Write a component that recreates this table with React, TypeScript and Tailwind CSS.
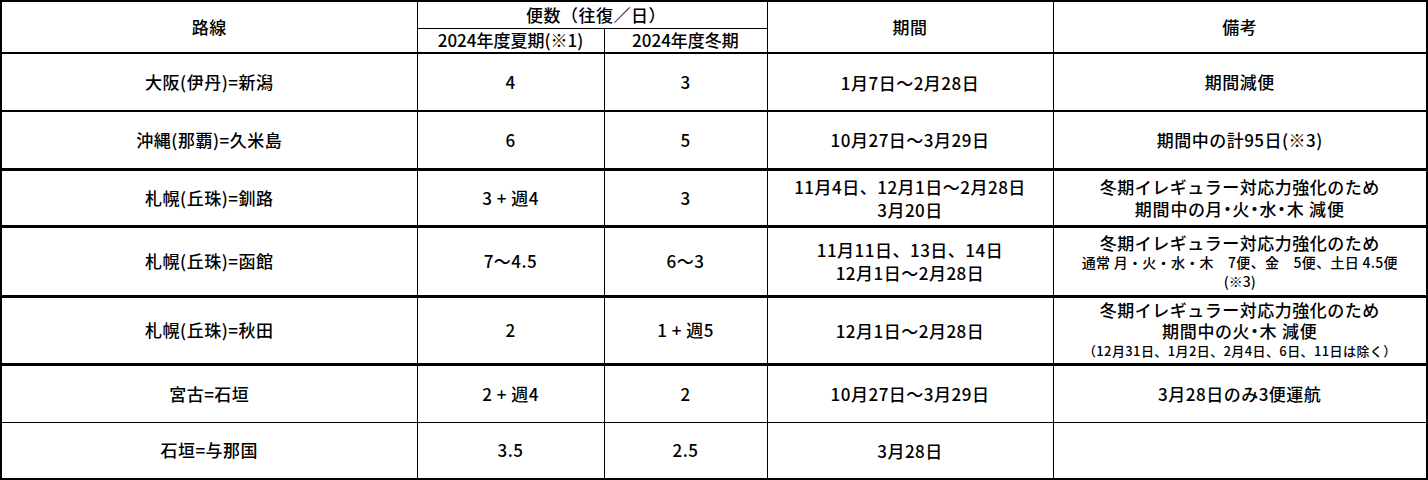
import type { ReactNode } from "react";

type Row = {
  route: string;
  summer: string;
  winter: string;
  period: string[];
  note: ReactNode;
  h: string;
  line: string;
};

const rows: Row[] = [
  {
    route: "大阪(伊丹)=新潟",
    summer: "4",
    winter: "3",
    period: ["1月7日～2月28日"],
    note: <div>期間減便</div>,
    h: "h-[58px]",
    line: "border-b-2",
  },
  {
    route: "沖縄(那覇)=久米島",
    summer: "6",
    winter: "5",
    period: ["10月27日～3月29日"],
    note: <div>期間中の計95日(※3)</div>,
    h: "h-[58px]",
    line: "border-b-[3px]",
  },
  {
    route: "札幌(丘珠)=釧路",
    summer: "3 + 週4",
    winter: "3",
    period: ["11月4日、12月1日～2月28日", "3月20日"],
    note: (
      <>
        <div>冬期イレギュラー対応力強化のため</div>
        <div className="[font-feature-settings:'palt'] tracking-[0.8px]">期間中の月・火・水・木 減便</div>
      </>
    ),
    h: "h-[57px]",
    line: "border-b-[3px]",
  },
  {
    route: "札幌(丘珠)=函館",
    summer: "7～4.5",
    winter: "6～3",
    period: ["11月11日、13日、14日", "12月1日～2月28日"],
    note: (
      <>
        <div className="leading-[21px]">冬期イレギュラー対応力強化のため</div>
        <div className="text-[14px] leading-[19px] tracking-[0.3px]">通常 月・火・水・木　7便、金　5便、土日 4.5便</div>
        <div className="text-[14px] leading-[18px] tracking-normal">(※3)</div>
      </>
    ),
    h: "h-[70px]",
    line: "border-b-[3px]",
  },
  {
    route: "札幌(丘珠)=秋田",
    summer: "2",
    winter: "1 + 週5",
    period: ["12月1日～2月28日"],
    note: (
      <>
        <div className="leading-[21px]">冬期イレギュラー対応力強化のため</div>
        <div className="leading-[21px] [font-feature-settings:'palt'] tracking-[0.8px]">期間中の火・木 減便</div>
        <div className="text-[13px] leading-[20px] tracking-[0.4px]">（12月31日、1月2日、2月4日、6日、11日は除く）</div>
      </>
    ),
    h: "h-[68px]",
    line: "border-b-[3px]",
  },
  {
    route: "宮古=石垣",
    summer: "2 + 週4",
    winter: "2",
    period: ["10月27日～3月29日"],
    note: <div>3月28日のみ3便運航</div>,
    h: "h-[58px]",
    line: "border-b",
  },
  {
    route: "石垣=与那国",
    summer: "3.5",
    winter: "2.5",
    period: ["3月28日"],
    note: null,
    h: "h-[57px]",
    line: "border-b-2",
  },
];

export default function App() {
  return (
    <div className="w-[1428px] h-[480px] bg-white text-black font-['Noto_Sans_CJK_JP',sans-serif]">
      <table className="w-[1428px] table-fixed border-collapse text-[17px] leading-[22px] tracking-[0.5px] text-center font-medium">
        <colgroup>
          <col className="w-[416px]" />
          <col className="w-[187px]" />
          <col className="w-[163px]" />
          <col className="w-[286px]" />
          <col />
        </colgroup>
        <thead>
          <tr className="h-[27px]">
            <th rowSpan={2} className="font-medium border border-black border-t-2 border-l-2 border-b-2">
              路線
            </th>
            <th colSpan={2} className="font-medium border border-black border-t-2 p-0 pl-[8px] leading-[24px]">
              便数（往復／日）
            </th>
            <th rowSpan={2} className="font-medium border border-black border-t-2 border-b-2">
              期間
            </th>
            <th rowSpan={2} className="font-medium border border-black border-t-2 border-b-2 border-r-2">
              備考
            </th>
          </tr>
          <tr className="h-[25px]">
            <th className="font-medium border border-black border-b-2 p-0 leading-[22px] tracking-normal">2024年度夏期(※1)</th>
            <th className="font-medium border border-black border-b-2 p-0 leading-[22px] tracking-normal">2024年度冬期</th>
          </tr>
        </thead>
        <tbody>
          {rows.map((r) => (
            <tr key={r.route} className={r.h}>
              <td className={`border border-black border-l-2 p-0 ${r.line}`}>{r.route}</td>
              <td className={`border border-black p-0 ${r.line}`}>{r.summer}</td>
              <td className={`border border-black p-0 ${r.line}`}>{r.winter}</td>
              <td className={`border border-black p-0 ${r.line}`}>
                {r.period.map((p) => (
                  <div key={p} className="leading-[23px]">
                    {p}
                  </div>
                ))}
              </td>
              <td className={`border border-black border-r-2 p-0 ${r.line}`}>{r.note}</td>
            </tr>
          ))}
        </tbody>
      </table>
    </div>
  );
}
